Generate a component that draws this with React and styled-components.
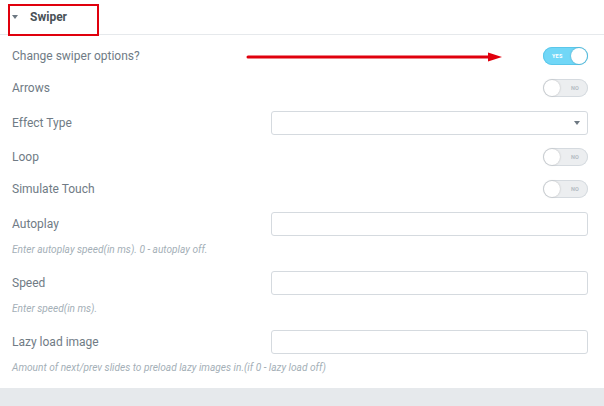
import React from "react";
import styled, { createGlobalStyle } from "styled-components";

const GlobalStyle = createGlobalStyle`
  html, body {
    margin: 0;
    padding: 0;
    background: #e6e9ec;
    font-family: Roboto, "Liberation Sans", sans-serif;
  }
`;

const StyledPanel = styled.div`
  position: relative;
  width: 604px;
  background: #ffffff;
  padding-bottom: 13px;
`;

const StyledSectionHeader = styled.div`
  display: flex;
  align-items: center;
  height: 34px;
  padding-left: 12px;
  border-bottom: 1px solid #e6e9ec;
  font-size: 12px;
  font-weight: 700;
  color: #495157;
`;

const StyledCaret = styled.span`
  width: 0;
  height: 0;
  margin-right: 12px;
  border-left: 3.5px solid transparent;
  border-right: 3.5px solid transparent;
  border-top: 4px solid #6d7882;
`;

const StyledContent = styled.div`
  display: flex;
  flex-direction: column;
  padding: 5px 16px 0 12px;
`;

const StyledRow = styled.div`
  display: flex;
  align-items: center;
  justify-content: space-between;
  height: ${(props) => (props.tall ? "37px" : "32px")};
`;

const StyledLabel = styled.label`
  font-size: 12px;
  color: #707b85;
`;

const StyledInput = styled.div`
  position: relative;
  box-sizing: border-box;
  width: 317px;
  height: 24px;
  border: 1px solid #d5dadf;
  border-radius: 3px;
  background: #fff;
`;

const StyledSelectCaret = styled.span`
  position: absolute;
  right: 7px;
  top: 9px;
  border-left: 3.5px solid transparent;
  border-right: 3.5px solid transparent;
  border-top: 4px solid #6d7882;
`;

const StyledHint = styled.div`
  font-size: 10.15px;
  font-style: italic;
  line-height: 14px;
  color: #a4afb7;
  margin-top: 1px;
  margin-bottom: ${(props) => (props.last ? "0" : "7px")};
`;

const StyledSwitch = styled.div`
  position: relative;
  box-sizing: border-box;
  width: 45px;
  height: 18px;
  border-radius: 18px;
  background: ${(props) => (props.on ? "#71d7f7" : "#eceef0")};
  box-shadow: inset 0 0 0 1px
    ${(props) => (props.on ? "#5bc7ea" : "#d5dadf")};
  display: flex;
  align-items: center;
  justify-content: ${(props) => (props.on ? "flex-start" : "flex-end")};
  padding: 0 9px;
  font-size: 5.5px;
  font-weight: 700;
  letter-spacing: 0.2px;
  color: ${(props) => (props.on ? "#ffffff" : "#b4bcc3")};
`;

const StyledKnob = styled.span`
  position: absolute;
  top: 1px;
  ${(props) => (props.on ? "right: 1px;" : "left: 1px;")}
  width: 16px;
  height: 16px;
  border-radius: 50%;
  background: #fff;
  box-shadow: 0 0 2px rgba(0, 0, 0, 0.25);
`;

const StyledHighlight = styled.div`
  position: absolute;
  left: 8px;
  top: 4px;
  width: 91px;
  height: 32px;
  box-sizing: border-box;
  border: 2px solid #e0000d;
`;

const StyledArrow = styled.svg`
  position: absolute;
  left: 246px;
  top: 51px;
`;

const Switch = ({ on }) => (
  <StyledSwitch on={on}>
    {on ? "YES" : "NO"}
    <StyledKnob on={on} />
  </StyledSwitch>
);

const App = () => {
  return (
    <>
      <GlobalStyle />
      <StyledPanel>
        <StyledSectionHeader>
          <StyledCaret />
          Swiper
        </StyledSectionHeader>
        <StyledContent>
          <StyledRow>
            <StyledLabel>Change swiper options?</StyledLabel>
            <Switch on />
          </StyledRow>
          <StyledRow>
            <StyledLabel>Arrows</StyledLabel>
            <Switch />
          </StyledRow>
          <StyledRow tall>
            <StyledLabel>Effect Type</StyledLabel>
            <StyledInput>
              <StyledSelectCaret />
            </StyledInput>
          </StyledRow>
          <StyledRow>
            <StyledLabel>Loop</StyledLabel>
            <Switch />
          </StyledRow>
          <StyledRow>
            <StyledLabel>Simulate Touch</StyledLabel>
            <Switch />
          </StyledRow>
          <StyledRow tall>
            <StyledLabel>Autoplay</StyledLabel>
            <StyledInput />
          </StyledRow>
          <StyledHint>Enter autoplay speed(in ms). 0 - autoplay off.</StyledHint>
          <StyledRow tall>
            <StyledLabel>Speed</StyledLabel>
            <StyledInput />
          </StyledRow>
          <StyledHint>Enter speed(in ms).</StyledHint>
          <StyledRow tall>
            <StyledLabel>Lazy load image</StyledLabel>
            <StyledInput />
          </StyledRow>
          <StyledHint last>
            Amount of next/prev slides to preload lazy images in.(if 0 - lazy
            load off)
          </StyledHint>
        </StyledContent>

        <StyledHighlight />
        <StyledArrow width="258" height="12" viewBox="0 0 258 12">
          <line x1="2" y1="6" x2="245" y2="6" stroke="#e0000d" strokeWidth="3" strokeLinecap="round" />
          <polygon points="242,1.5 256,6 242,10.5" fill="#e0000d" />
        </StyledArrow>
      </StyledPanel>
    </>
  );
};

export default App;
